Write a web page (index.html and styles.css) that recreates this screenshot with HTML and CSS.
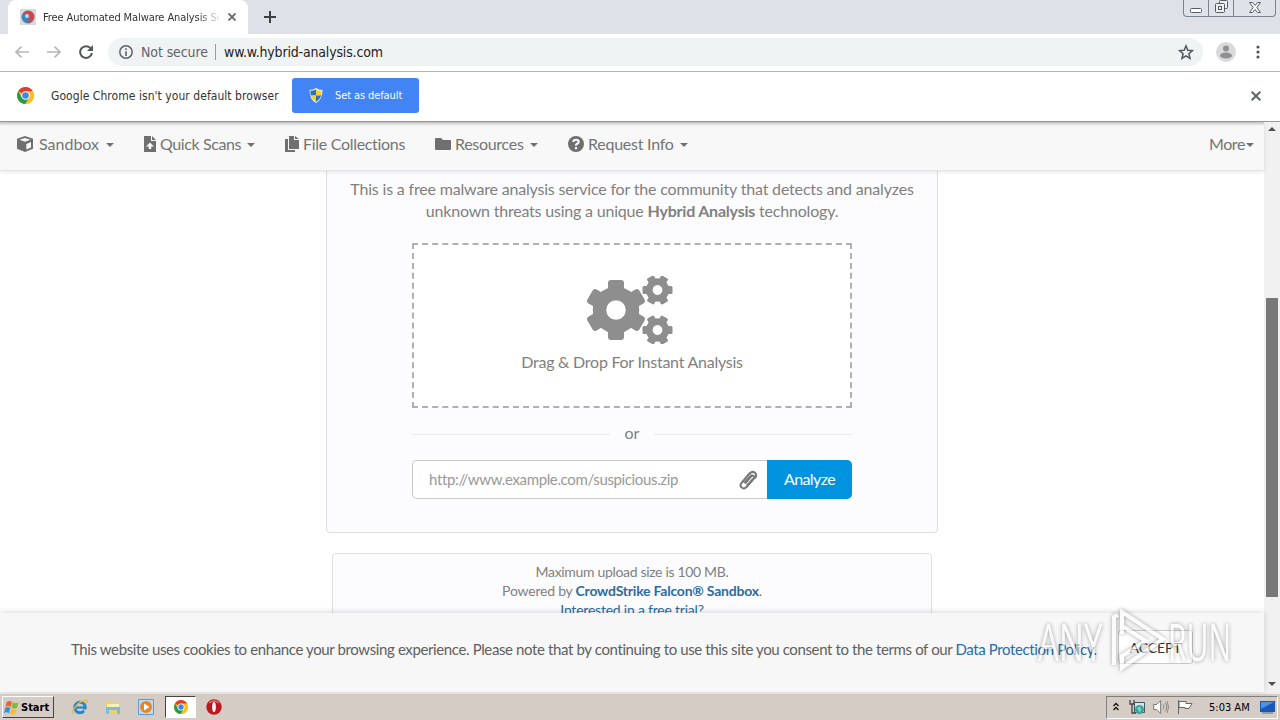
FILE: index.html
```html
<!DOCTYPE html>
<html lang="en">
<head>
    <meta charset="UTF-8">
    <meta name="viewport" content="width=device-width, initial-scale=1.0">
    <title>Free Automated Malware Analysis Service</title>
    <link rel="stylesheet" href="styles.css">
</head>
<body>

<!-- Shared icons -->
<svg class="defs">
    <symbol id="chrome" viewBox="0 0 16 16">
        <circle cx="8" cy="8" r="8" fill="#fbc116"/>
        <path d="M8 8 1.1 4A8 8 0 0 1 14.9 4z" fill="#e33b2e"/>
        <path d="M1.1 4A8 8 0 0 0 7.8 16L11.4 9.800 8 8 4.600 9.800z" fill="#259b49"/>
        <path d="M8 4h6.900a8 8 0 0 1-7.100 12l3.600-6z" fill="#fbc116"/>
        <circle cx="8" cy="8" r="4" fill="#fff"/>
        <circle cx="8" cy="8" r="3.100" fill="#4285e8"/>
    </symbol>
    <symbol id="gear" viewBox="-30 -30 60 60">
        <circle r="16.500" fill="none" stroke="currentColor" stroke-width="13.500"/>
        <g fill="currentColor">
            <path id="tooth" d="M-8-20v-7q0-3 3-3H5q3 0 3 3v7z"/>
            <use href="#tooth" transform="rotate(60)"/>
            <use href="#tooth" transform="rotate(120)"/>
            <use href="#tooth" transform="rotate(180)"/>
            <use href="#tooth" transform="rotate(240)"/>
            <use href="#tooth" transform="rotate(300)"/>
        </g>
    </symbol>
</svg>

<div class="tabstrip">
    <div class="tab">
        <svg class="favicon" viewBox="0 0 16 16"><path fill="#d9d9d9" d="M0 0h16v16H0z"/><circle cx="8" cy="8" r="6.500" fill="#3d83bd"/><path d="M4 3q5-3 9 1 3 5-2 9-4 1-3-2 4-2 1-5-2-2-5-1z" fill="#e04238"/><circle cx="7" cy="7" r="2" fill="#b7d7ec"/></svg>
        <span class="tab-title">Free Automated Malware Analysis Se</span>
        <svg class="tab-close" viewBox="0 0 8 8"><path d="M.5.5l7 7M7.500.5l-7 7" stroke="#5f6368" stroke-width="1.700"/></svg>
    </div>
    <svg class="new-tab" viewBox="0 0 12 12"><path d="M6 0v12M0 6h12" stroke="#3c4043" stroke-width="2"/></svg>
    <div class="win-buttons">
        <span class="win-btn"><svg width="12" height="5"><rect x=".5" y=".5" width="11" height="4" rx="1" fill="#fff" stroke="#555c66"/></svg></span>
        <span class="win-btn"><svg width="13" height="13" fill="#eee" stroke="#555c66"><rect x="4.500" y=".5" width="8" height="8" rx="1"/><rect x=".5" y="3.500" width="9" height="9" rx="1"/><rect x="3.500" y="6.500" width="3" height="3"/></svg></span>
        <span class="win-btn wide"><svg width="12" height="11"><path d="M.5.500h3L6 3.500 8.500.500h3L7.800 5.500l3.700 5h-3L6 7.500l-2.500 3h-3l3.700-5z" fill="#fff" stroke="#555c66"/></svg></span>
    </div>
</div>

<div class="toolbar">
    <svg class="arrow" viewBox="0 0 14 12"><path d="M14 6H1M6.500.700 1 6l5.500 5.300" fill="none" stroke="#b4b6b9" stroke-width="1.700"/></svg>
    <svg class="arrow" viewBox="0 0 14 12"><path d="M0 6h13M7.500.700 13 6l-5.500 5.300" fill="none" stroke="#b4b6b9" stroke-width="1.700"/></svg>
    <svg class="reload" viewBox="0 0 14 14"><path d="M11.800 3.500A5.900 5.900 0 1 0 12.900 8" fill="none" stroke="#53575b" stroke-width="2"/><path d="M14 0v6H8z" fill="#53575b"/></svg>
    <div class="omnibox">
        <svg class="info" viewBox="0 0 14 14"><circle cx="7" cy="7" r="6.200" fill="none" stroke="#5f6368" stroke-width="1.500"/><path d="M7 6.200V11M7 3.300V5" stroke="#5f6368" stroke-width="1.600"/></svg>
        <span class="not-secure">Not secure</span>
        <span class="divider"></span>
        <span class="url">ww.w.hybrid-analysis.com</span>
        <svg class="star" viewBox="0 0 16 16"><path d="M8 1.800l1.800 4.400 4.700.400-3.600 3.100 1.100 4.600L8 11.800l-4 2.500 1.100-4.600L1.500 6.600l4.700-.4z" fill="none" stroke="#53575b" stroke-width="1.500"/></svg>
    </div>
    <svg class="avatar" viewBox="0 0 20 20"><circle cx="10" cy="10" r="10" fill="#dadada"/><circle cx="10" cy="6.500" r="3" fill="#8e9093"/><ellipse cx="10" cy="13.500" rx="6" ry="3" fill="#8e9093"/></svg>
    <svg class="menu" viewBox="0 0 4 14" fill="#53575b"><circle cx="2" cy="2" r="1.600"/><circle cx="2" cy="7" r="1.600"/><circle cx="2" cy="12" r="1.600"/></svg>
</div>

<div class="infobar">
    <svg class="chrome-icon"><use href="#chrome"/></svg>
    <span class="infobar-text">Google Chrome isn't your default browser</span>
    <button class="default-btn">
        <svg class="shield" viewBox="0 0 14 16"><path d="M7 0q3 2 7 2 0 10-7 14Q0 12 0 2q4 0 7-2z" fill="#f3f1e2"/><path d="M7 1.500V8H1.300Q1 5.500 1 3q3.500 0 6-1.500z" fill="#2d72bd"/><path d="M7 1.500V8h5.700q.300-2.500.300-5-3.500 0-6-1.500zM1.300 8H7v6.800Q2.500 12 1.300 8z" fill="#f8cf2c"/><path d="M12.700 8H7v6.800Q11.500 12 12.700 8z" fill="#2d72bd"/></svg>
        <span>Set as default</span>
    </button>
    <svg class="infobar-close" viewBox="0 0 10 10"><path d="M.700.700l8.600 8.600M9.300.700.700 9.300" stroke="#5f6368" stroke-width="2"/></svg>
</div>

<div class="page">
    <div class="view">
        <nav class="navbar">
            <a class="nav-item">
                <svg class="cube" viewBox="0 0 16 16"><path d="M8 0l8 2.800v10L8 16l-8-3.200v-10z" fill="#6f6f6f"/><path d="M2.500 3.700 8 1.900l5.500 1.800L8 5.700zM9.300 8l4.700-1.900v5.400l-4.700 2z" fill="#f8f8f8"/></svg>
                <span class="t-sandbox">Sandbox</span><i class="caret"></i>
            </a>
            <a class="nav-item tight">
                <svg class="file" viewBox="0 0 12 16"><path d="M0 0h7v5h5v11H0zM8 0l4 4H8zM6 6.500l-4 4h2.700V13h2.600v-2.500H10z" fill="#6f6f6f" fill-rule="evenodd"/></svg>
                <span class="t-quick">Quick Scans</span><i class="caret"></i>
            </a>
            <a class="nav-item tight">
                <svg class="files" viewBox="0 0 14 16"><path d="M4 0h5v4h5v9H4zM10 0l4 3h-4zM0 3h3v11h7v2H0z" fill="#6f6f6f"/></svg>
                <span class="t-files">File Collections</span>
            </a>
            <a class="nav-item tight">
                <svg class="folder" viewBox="0 0 16 12"><path d="M1 0h5l2 2h7q1 0 1 1v8q0 1-1 1H1q-1 0-1-1V1q0-1 1-1z" fill="#6f6f6f"/></svg>
                <span class="t-resources">Resources</span><i class="caret"></i>
            </a>
            <a class="nav-item tight">
                <svg class="question" viewBox="0 0 16 16"><circle cx="8" cy="8" r="8" fill="#6f6f6f"/><path d="M5.300 6Q5.400 3.800 8 3.800q2.700 0 2.700 2 0 1.200-1.500 2T8 9.700M8 11v2.200" fill="none" stroke="#f8f8f8" stroke-width="2.100"/></svg>
                <span class="t-request">Request Info</span><i class="caret"></i>
            </a>
            <a class="nav-item more"><span class="t-more">More</span><i class="caret"></i></a>
        </nav>

        <main class="content">
            <section class="panel">
                <p class="intro">
                    <span class="intro-1">This is a free malware analysis service for the community that detects and analyzes</span><br>
                    <span class="intro-2">unknown threats using a unique <b>Hybrid Analysis</b> technology.</span>
                </p>
                <div class="dropzone">
                    <svg class="gears" viewBox="0 0 86 68">
                        <use href="#gear" x="-1" y="4" width="60" height="60"/>
                        <g transform="rotate(30 70.500 14)"><use href="#gear" x="55.500" y="-1" width="30" height="30"/></g>
                        <g transform="rotate(30 70.500 54)"><use href="#gear" x="55.500" y="39" width="30" height="30"/></g>
                    </svg>
                    <span class="drop-text">Drag &amp; Drop For Instant Analysis</span>
                </div>
                <div class="or"><span>or</span></div>
                <div class="url-form">
                    <div class="url-input">
                        <span class="placeholder">http://www.example.com/suspicious.zip</span>
                        <svg class="clip" viewBox="0 0 18 20"><path d="M6 13.500 12 6.500q1.500-1.500 2.700-.4t0 2.700L7.500 17q-2.500 2.500-4.800.6t-.2-4.600L10 4q3-3.500 6-1.200 2.500 2.500-.3 5.600" fill="none" stroke="#777" stroke-width="2"/><path d="M4.800 13 12.500 4.500M7.500 15.500l6.500-7" fill="none" stroke="#777" stroke-width="1.200"/></svg>
                    </div>
                    <button class="analyze">Analyze</button>
                </div>
            </section>
            <section class="notes">
                <span class="note-1">Maximum upload size is 100 MB.</span><br>
                <span class="note-2">Powered by <a class="strong">CrowdStrike Falcon® Sandbox</a>.</span><br>
                <a class="note-3">Interested in a free trial?</a>
            </section>
        </main>

        <footer class="cookies">
            <span class="cookie-text">This website uses cookies to enhance your browsing experience. Please note that by continuing to use this site you consent to the terms of our <a>Data Protection Policy</a>.</span>
            <button class="accept">ACCEPT</button>
        </footer>
    </div>
    <div class="scrollbar">
        <i class="up"></i>
        <div class="thumb"></div>
        <i class="down"></i>
    </div>
    <div class="watermark">
        <span class="any">ANY</span>
        <svg viewBox="0 0 58 66"><path d="M4 57V9l4-2M12 26V4l41 27-41 29V48l24-15-24-15" fill="none" stroke="#fff" stroke-width="4"/></svg>
        <span class="run">RUN</span>
    </div>
</div>

<div class="taskbar">
    <div class="start">
        <svg viewBox="0 0 17 16"><path d="M3 2q3-2 5.500 0L7 7.500q-2.500-2-5.500 0z" fill="#e8642b"/><path d="M9.500 2.500q3 2 6 0L14 8q-3 2-6 0z" fill="#7fb93c"/><path d="M1.200 8.500q3-2 5.500 0L5.300 14q-3-2-5.300 0z" fill="#3b8fd6"/><path d="M7.700 9q3 2 6 0l-1.500 5.500q-3 2-6 0z" fill="#f7bd2b"/></svg>
        <span>Start</span>
    </div>
    <svg class="task-icon ie" viewBox="0 0 16 16"><circle cx="8" cy="8.500" r="5.200" fill="none" stroke="#2285cf" stroke-width="3"/><path d="M4 8.500h9.500" stroke="#2285cf" stroke-width="2.200"/><path d="M11 10.500h5V13h-3z" fill="#d4d0c8"/><path d="M2 15Q-1 13 4 7T14.500 1Q16 2 14 5" fill="none" stroke="#e6b93c" stroke-width="1.300"/></svg>
    <svg class="task-icon" viewBox="0 0 16 16"><path d="M1 2h5l1 1.500h7V14H1z" fill="#efcf68"/><path d="M2 5h12v4H2z" fill="#fbf0b5"/><path d="M1 8h14v7h-3v-4H4v4H1z" fill="#78bce4"/></svg>
    <svg class="task-icon" viewBox="0 0 16 16"><path d="M.5.5h15v15H.5z" fill="#b9dcf5" stroke="#5c9bd0"/><circle cx="8" cy="8" r="6" fill="#ee8420"/><path d="M6 4.500 11.500 8 6 11.500z" fill="#fff"/></svg>
    <div class="task-active"><svg class="task-chrome"><use href="#chrome"/></svg></div>
    <svg class="task-icon opera" viewBox="0 0 16 16"><circle cx="8" cy="8" r="7.700" fill="#bd1720"/><path d="M3 4q5-4 10 0" fill="none" stroke="#e26c6c" stroke-width="1.500"/><ellipse cx="8" cy="8" rx="1.800" ry="5" fill="#fff"/></svg>
    <div class="tray">
        <svg class="chevrons" viewBox="0 0 6 9"><path d="M.5 4 3 1.500 5.500 4M.5 8 3 5.500 5.500 8" fill="none" stroke="#111" stroke-width="1.300"/></svg>
        <svg class="net" viewBox="0 0 16 16"><path d="M5.500 3.500h10v10h-10z" fill="#d8e5e7" stroke="#456"/><circle cx="10.500" cy="10.500" r="4.500" fill="#38a0a4"/><path d="M8 9q3-3 4 0t-2 4" fill="#7cd4a3"/><path d="M1 1v4h4V1M3 5v9h4" fill="none" stroke="#444" stroke-width="1.300"/></svg>
        <svg class="sound" viewBox="0 0 16 14"><path d="M.7 4.500h3l4-4v13l-4-4h-3z" fill="#fff" stroke="#777"/><path d="M10 4.500q2 2.500 0 5M12 2.500q3.500 4.500 0 9M14 1q3 6 0 12" fill="none" stroke="#888"/></svg>
        <svg class="flag" viewBox="0 0 16 14"><path d="M1.500 0v14M2 1.500h7v2h6l-3 5H8v-1H2z" fill="#fff" stroke="#666"/></svg>
        <span class="clock">5:03 AM</span>
        <svg class="desktop" viewBox="0 0 15 13"><path d="M0 0h15v11H0z" fill="#1c57b5"/><path d="M1 1h13L1 8z" fill="#4e92e0"/><path d="M2 11h11v2H2z" fill="#8e9cb0"/></svg>
    </div>
</div>

</body>
</html>
```
FILE: styles.css
```css
* {
    box-sizing: border-box;
}
body {
    margin: 0;
    width: 1280px;
    height: 720px;
    overflow: hidden;
    display: flex;
    flex-direction: column;
    background: #fff;
    font-family: "DejaVu Sans Condensed", "DejaVu Sans", sans-serif;
    font-stretch: condensed;
    font-size: 12px;
    color: #333;
}
svg {
    display: block;
    flex: none;
}
button {
    font: inherit;
}
span {
    white-space: nowrap;
}
.defs {
    width: 0;
    height: 0;
    position: absolute;
}

/* Browser window */
.tabstrip {
    height: 34px;
    flex: none;
    display: flex;
    align-items: flex-start;
    padding-left: 8px;
    background: #dee1e8;
}
.tab {
    width: 240px;
    height: 34px;
    display: flex;
    align-items: center;
    padding: 0 12px;
    background: #fff;
    border-radius: 8px 8px 0 0;
}
.favicon {
    width: 16px;
    height: 16px;
}
.tab-title {
    width: 176px;
    margin-left: 7px;
    overflow: hidden;
    font-size: 11px;
    letter-spacing: -0.1px;
    -webkit-mask-image: linear-gradient(to right, #000 155px, transparent 178px);
}
.tab-close {
    width: 8px;
    height: 8px;
    margin-left: 9px;
}
.new-tab {
    width: 12px;
    height: 12px;
    margin: 11px 0 0 16px;
}
.win-buttons {
    display: flex;
    height: 17px;
    margin-left: auto;
    margin-right: 4px;
    border: 1px solid #7d838d;
    border-top: 0;
    border-radius: 0 0 4px 4px;
    background: #dfe2e8;
}
.win-btn {
    width: 25px;
    display: flex;
    justify-content: center;
    align-items: flex-end;
    padding-bottom: 3px;
    border-right: 1px solid #7d838d;
}
.win-btn.wide {
    width: 41px;
    border-right: 0;
}
.toolbar {
    height: 38px;
    flex: none;
    display: flex;
    align-items: center;
    padding: 0 20px 2px 15px;
    border-bottom: 1px solid #b5b5b5;
}
.arrow {
    width: 14px;
    height: 12px;
    margin-right: 18px;
}
.reload {
    width: 14px;
    height: 14px;
}
.omnibox {
    width: 1095px;
    height: 28px;
    margin-left: 15px;
    display: flex;
    align-items: center;
    padding: 0 9px 0 11px;
    border-radius: 14px;
    background: #f0f3f4;
    font-size: 14px;
}
.info {
    width: 14px;
    height: 14px;
}
.not-secure {
    margin-left: 8px;
    width: 67px;
    color: #5f6368;
    letter-spacing: -0.1px;
}
.url {
    color: #222;
    letter-spacing: -0.17px;
}
.divider {
    width: 1px;
    height: 16px;
    margin: 0 8px 0 7px;
    background: #9a9da0;
}
.star {
    width: 16px;
    height: 16px;
    margin-left: auto;
}
.avatar {
    width: 20px;
    height: 20px;
    margin-left: 13px;
}
.menu {
    width: 4px;
    height: 14px;
    margin-left: auto;
}
.infobar {
    height: 49px;
    flex: none;
    display: flex;
    align-items: center;
    padding: 0 19px 2px 17px;
}
.chrome-icon {
    width: 17px;
    height: 17px;
}
.infobar-text {
    width: 241px;
    margin-left: 17px;
    font-size: 12px;
    letter-spacing: 0.05px;
}
.default-btn {
    width: 127px;
    height: 35px;
    display: flex;
    align-items: center;
    gap: 12px;
    padding: 0 0 0 17px;
    border: 0;
    border-radius: 3px;
    background: #4284f3;
    color: #fff;
    font-size: 11px;
    letter-spacing: -0.1px;
}
.shield {
    width: 14px;
    height: 15px;
}
.infobar-close {
    width: 10px;
    height: 10px;
    margin-left: auto;
}

/* Web page */
.page {
    position: relative;
    height: 571px;
    flex: none;
    display: flex;
    border-top: 1px solid #999;
    font-family: Lato, "Liberation Sans", sans-serif;
    font-stretch: normal;
    font-size: 16px;
    color: #808080;
}
.view {
    width: 1264px;
    display: flex;
    flex-direction: column;
}
.navbar {
    position: relative;
    height: 49px;
    flex: none;
    display: flex;
    align-items: center;
    padding: 0 10px 5px 17px;
    border-bottom: 1px solid #e4e4e4;
    background: linear-gradient(#c0c0c0, #f8f8f8 4px);
    box-shadow: 0 1px 4px rgba(0, 0, 0, 0.1);
}
.nav-item {
    display: flex;
    align-items: center;
    margin-right: 30px;
    color: #747474;
}
.nav-item svg {
    margin-right: 6px;
}
.nav-item.tight svg {
    margin-right: 4px;
}
.nav-item.more {
    margin-left: auto;
    margin-right: 0;
}
.t-sandbox {
    width: 61px;
}
.t-quick {
    width: 81px;
    letter-spacing: -0.4px;
}
.t-files {
    width: 102px;
    letter-spacing: -0.3px;
}
.t-resources {
    width: 69px;
    letter-spacing: -0.3px;
}
.t-request {
    width: 86px;
    letter-spacing: -0.25px;
}
.t-more {
    letter-spacing: -0.4px;
}
.caret {
    margin: 2px 0 0 6px;
    border: 4px solid transparent;
    border-top-color: #707070;
    border-bottom: 0;
}
.more .caret {
    margin-left: 1px;
}
.cube,
.question {
    width: 16px;
    height: 16px;
}
.file {
    width: 12px;
    height: 16px;
}
.files {
    width: 14px;
    height: 16px;
}
.folder {
    width: 16px;
    height: 12px;
}
.content {
    height: 442px;
    flex: none;
    overflow: hidden;
    display: flex;
    flex-direction: column;
    align-items: center;
    text-align: center;
}
.panel {
    width: 612px;
    height: 362px;
    flex: none;
    display: flex;
    flex-direction: column;
    align-items: center;
    border: 1px solid #dfdfe1;
    border-top: 0;
    border-radius: 0 0 4px 4px;
    background: #fcfcfe;
}
.intro {
    margin: 7px 0 0;
    height: 65px;
    line-height: 22px;
}
.intro-1 {
    letter-spacing: -0.18px;
}
.intro-2 {
    letter-spacing: -0.2px;
}
.dropzone {
    width: 440px;
    height: 165px;
    display: flex;
    flex-direction: column;
    align-items: center;
    border: 2px dashed #b0b0b0;
    background: #fff;
}
.gears {
    width: 86px;
    height: 68px;
    margin-top: 31px;
    margin-right: 4px;
    color: #8e8e8e;
}
.drop-text {
    margin-top: 8px;
    line-height: 20px;
    letter-spacing: -0.25px;
}
.or {
    width: 440px;
    height: 52px;
    display: flex;
    align-items: center;
    gap: 15px;
}
.or span {
    margin-top: -3px;
}
.or::before,
.or::after {
    content: "";
    flex: 1;
    height: 1px;
    background: #e9e9ec;
}
.url-form {
    width: 440px;
    height: 39px;
    display: flex;
}
.url-input {
    width: 355px;
    display: flex;
    align-items: center;
    justify-content: space-between;
    padding: 0 10px 0 16px;
    border: 1px solid #c8c8c8;
    border-right: 0;
    border-radius: 5px 0 0 5px;
    background: #fff;
    color: #999;
}
.placeholder {
    margin-top: -2px;
    font-size: 15px;
    letter-spacing: -0.36px;
}
.clip {
    width: 18px;
    height: 20px;
}
.analyze {
    width: 85px;
    padding: 0 0 2px;
    border: 0;
    border-radius: 0 5px 5px 0;
    background: #0093df;
    color: #fff;
    letter-spacing: -0.6px;
}
.notes {
    width: 600px;
    height: 110px;
    flex: none;
    margin-top: 20px;
    padding-top: 8px;
    border: 1px solid #e0e0e2;
    border-radius: 4px;
    background: #fcfcfe;
    font-size: 14px;
    line-height: 19px;
}
.note-1 {
    letter-spacing: -0.33px;
}
.note-2,
.note-3 {
    letter-spacing: -0.22px;
}
.notes a,
.cookies a {
    color: #2a6ba5;
}
.strong {
    font-weight: bold;
}
.cookies {
    position: relative;
    height: 79px;
    flex: none;
    display: flex;
    align-items: center;
    padding: 0 0 7px 71px;
    background: #f7f7f7;
    box-shadow: 0 -1px 6px rgba(0, 0, 0, 0.15);
    color: #606060;
    font-size: 15px;
}
.cookie-text {
    width: 1028px;
    letter-spacing: -0.38px;
}
.accept {
    width: 75px;
    height: 34px;
    margin-left: 19px;
    margin-top: -4px;
    padding: 0;
    border: 1px solid #c9c9c9;
    border-radius: 3px;
    background: #fff;
    color: #333;
    font-size: 14px;
    letter-spacing: -0.1px;
}
.scrollbar {
    width: 16px;
    display: flex;
    flex-direction: column;
    align-items: center;
    padding: 5px 0 6px;
    background: #f1f1f1;
}
.up,
.down {
    border: 4px solid transparent;
}
.up {
    border-top: 0;
    border-bottom-color: #505050;
}
.down {
    margin-top: auto;
    border-bottom: 0;
    border-top-color: #505050;
}
.thumb {
    width: 12px;
    height: 299px;
    margin-top: 167px;
    background: #787878;
}

/* Overlay logo */
.watermark {
    position: absolute;
    left: 1038px;
    top: 486px;
    width: 195px;
    display: flex;
    align-items: center;
    opacity: 0.6;
    color: #fff;
    font: 400 51px/66px "Open Sans", sans-serif;
    filter: drop-shadow(0 0 2px rgba(0, 0, 0, 0.6));
}
.watermark span {
    transform-origin: left;
}
.any {
    width: 72px;
    transform: scaleX(0.65);
}
.run {
    width: 65px;
    transform: scaleX(0.59);
}
.watermark svg {
    width: 58px;
    height: 66px;
}

/* Taskbar */
.taskbar {
    height: 28px;
    flex: none;
    display: flex;
    align-items: center;
    padding-left: 2px;
    border-top: 2px solid #f0eeea;
    background: #d5cdc5;
    color: #000;
}
.start {
    width: 52px;
    height: 22px;
    display: flex;
    align-items: center;
    gap: 1px;
    padding-left: 1px;
    border: 1px solid;
    border-color: #fff #444 #444 #fff;
    font-size: 11px;
    font-weight: bold;
}
.start svg {
    width: 16px;
    height: 15px;
}
.task-icon {
    width: 16px;
    height: 16px;
    margin-left: 17px;
}
.task-icon.ie {
    margin-left: 18px;
}
.task-active {
    width: 31px;
    height: 22px;
    margin-left: 11px;
    display: flex;
    align-items: center;
    justify-content: center;
    border: 1px solid;
    border-color: #444 #fff #fff #444;
    background: #fff;
}
.task-chrome {
    width: 14px;
    height: 14px;
}
.task-icon.opera {
    margin-left: 10px;
}
.tray {
    width: 172px;
    height: 23px;
    margin-left: auto;
    margin-right: 2px;
    display: flex;
    align-items: center;
    padding-left: 6px;
    border: 1px solid;
    border-color: #808080 #fff #fff #808080;
    font-size: 11px;
}
.chevrons {
    width: 6px;
    height: 9px;
    margin-bottom: 2px;
}
.net {
    width: 16px;
    height: 16px;
    margin-left: 10px;
}
.sound {
    width: 16px;
    height: 14px;
    margin-left: 8px;
}
.flag {
    width: 16px;
    height: 14px;
    margin-left: 8px;
}
.clock {
    width: 42px;
    margin-left: 16px;
}
.desktop {
    width: 15px;
    height: 13px;
    margin-left: auto;
    margin-right: 2px;
}
```
